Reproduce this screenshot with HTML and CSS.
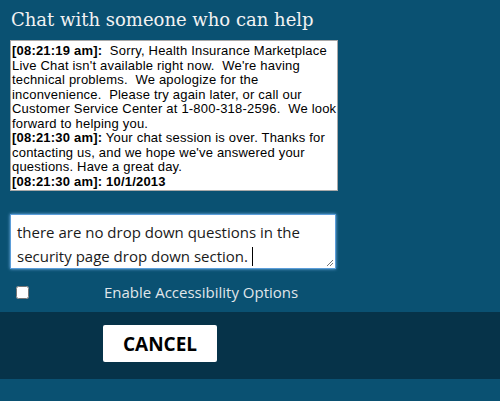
FILE: index.html
```html
<!DOCTYPE html>
<html>
<head>
<meta charset="utf-8">
<link rel="stylesheet" href="styles.css">
</head>
<body>
<div class="panel">
  <h1 class="title">Chat with someone who can help</h1>
  <div class="log"><b>[08:21:19 am]:</b>  Sorry, Health Insurance Marketplace
Live Chat isn't available right now.  We're having
technical problems.  We apologize for the
inconvenience.  Please try again later, or call our
Customer Service Center at 1-800-318-2596.  We look
forward to helping you.
<b>[08:21:30 am]:</b> Your chat session is over. Thanks for
contacting us, and we hope we've answered your
questions. Have a great day.
<b>[08:21:30 am]: 10/1/2013</b></div>
  <div class="input" role="textbox">there are no drop down questions in the security page drop down section. <span class="caret"></span><svg class="grip" width="9" height="9" viewBox="0 0 9 9"><path d="M8 2 L2 8 M8 5 L5 8" stroke="#777" stroke-width="1"/></svg></div>
  <label class="access"><input type="checkbox" class="check"><span class="access-text">Enable Accessibility Options</span></label>
</div>
<div class="footer">
  <button class="cancel">CANCEL</button>
</div>
</body>
</html>
```
FILE: styles.css
```css
html, body {
  margin: 0;
  padding: 0;
  background: #0a5172;
  width: 500px;
  height: 401px;
  overflow: hidden;
}
.panel {
  padding: 0 0 0 10px;
  height: 312px;
  box-sizing: border-box;
}
.title {
  margin: 0;
  padding: 9px 0 0 1px;
  height: 40px;
  box-sizing: border-box;
  font-family: "DejaVu Serif", serif;
  font-weight: normal;
  font-size: 18px;
  line-height: 22px;
  color: #f2f2f2;
}
.log {
  width: 328px;
  height: 151px;
  box-sizing: border-box;
  background: #fff;
  border: 1px solid #a9a9a9;
  padding: 3px 0 0 1px;
  font-family: "Liberation Sans", Arial, sans-serif;
  font-size: 13px;
  letter-spacing: 0.2px;
  line-height: 14.5px;
  color: #000;
  white-space: pre;
  overflow: hidden;
}
.input {
  position: relative;
  margin-top: 23px;
  width: 326px;
  height: 55px;
  box-sizing: border-box;
  background: #fff;
  border: 1px solid #5b9dd9;
  box-shadow: 0 0 3px #6fb0ea;
  padding: 5px 6px 0 6px;
  font-family: "Open Sans", sans-serif;
  font-size: 15px;
  line-height: 24px;
  color: #1a1a1a;
}
.caret {
  display: inline-block;
  width: 1px;
  height: 19px;
  background: #000;
  vertical-align: -4px;
}
.grip {
  position: absolute;
  right: 1px;
  bottom: 1px;
}
.access {
  display: flex;
  align-items: center;
  margin-top: 13px;
}
.check {
  margin: 0 0 0 6px;
  width: 13px;
  height: 13px;
}
.access-text {
  margin-left: 75px;
  font-family: "Open Sans", sans-serif;
  font-size: 15px;
  color: #e0e6ea;
}
.footer {
  background: #063349;
  height: 67px;
  padding: 13px 0 0 103px;
  box-sizing: border-box;
}
.cancel {
  width: 114px;
  height: 37px;
  background: #fff;
  border: none;
  border-radius: 2px;
  font-family: "Open Sans", sans-serif;
  font-weight: bold;
  font-size: 19px;
  color: #000;
  padding: 0;
  cursor: pointer;
}
```
